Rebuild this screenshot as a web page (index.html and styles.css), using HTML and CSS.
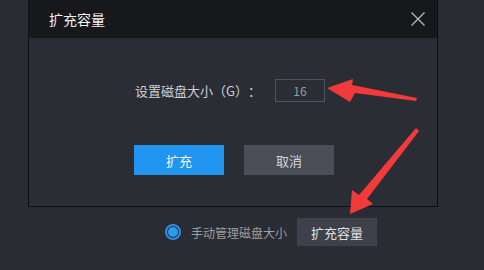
FILE: index.html
```html
<!DOCTYPE html>
<html lang="zh">
<head>
<meta charset="utf-8">
<link rel="stylesheet" href="styles.css">
</head>
<body>
<div class="page">
  <div class="dialog">
    <div class="titlebar">
      <span class="title">扩充容量</span>
      <svg class="close" width="16" height="16" viewBox="0 0 16 16"><path d="M1.5 1.5 L14.5 14.5 M14.5 1.5 L1.5 14.5" stroke="#b8b9bd" stroke-width="1.3" fill="none"/></svg>
    </div>
    <div class="body">
      <div class="row">
        <span class="label">设置磁盘大小（G）：</span>
        <div class="input">16</div>
      </div>
      <div class="actions">
        <button class="btn primary">扩充</button>
        <button class="btn secondary">取消</button>
      </div>
    </div>
  </div>
  <div class="footer">
    <span class="radio"><span class="dot"></span></span>
    <span class="ftext">手动管理磁盘大小</span>
    <button class="btn small">扩充容量</button>
  </div>
  <svg class="arrows" width="484" height="270" viewBox="0 0 484 270">
    <polygon points="327,88 353,79 352,85 417,98 416,101 355,93 350,102" fill="#f23a3a"/>
    <polygon points="350,214 352,190 359,195 416,128 419,131 367,199 373,204" fill="#f23a3a"/>
  </svg>
</div>
</body>
</html>
```
FILE: styles.css
```css
html, body {
  margin: 0;
  padding: 0;
}
body {
  background: #2a2c33;
  font-family: "Noto Sans CJK SC", "Noto Sans", sans-serif;
  width: 484px;
  height: 270px;
  overflow: hidden;
  text-spacing-trim: space-all;
}
.page {
  position: relative;
  width: 484px;
  height: 270px;
}
.dialog {
  margin-left: 28px;
  width: 408px;
  height: 206px;
  border: 1px solid #0e0f12;
  border-top: none;
  background: #2b2d35;
  display: flex;
  flex-direction: column;
}
.titlebar {
  height: 38px;
  background: #17181c;
  display: flex;
  align-items: center;
  justify-content: space-between;
  padding: 0 11px 0 20px;
  flex-shrink: 0;
}
.title {
  color: #f0f0f0;
  font-size: 14px;
}
.close {
  display: block;
}
.body {
  display: flex;
  flex-direction: column;
  align-items: center;
  padding-top: 41px;
}
.row {
  display: flex;
  align-items: center;
  gap: 14px;
  margin-right: 6px;
}
.label {
  color: #cfd0d3;
  font-size: 13px;
  text-spacing-trim: space-all;
}
.input {
  width: 48px;
  height: 21px;
  border: 1px solid #50535c;
  color: #9a9ca2;
  font-size: 12px;
  line-height: 21px;
  text-align: center;
  background: #2b2d35;
}
.actions {
  display: flex;
  gap: 20px;
  margin-top: 43px;
  margin-left: 2px;
}
.btn {
  border: none;
  font-family: inherit;
  font-size: 13px;
  padding: 0;
  cursor: pointer;
}
.primary {
  width: 90px;
  height: 30px;
  background: #2196f0;
  color: #eef6ff;
}
.secondary {
  width: 90px;
  height: 30px;
  background: #4b4e58;
  color: #d4d5d8;
}
.footer {
  display: flex;
  align-items: center;
  margin-left: 165px;
  margin-top: 11px;
}
.radio {
  width: 12px;
  height: 12px;
  border: 2px solid #2a8fe6;
  border-radius: 50%;
  display: flex;
  align-items: center;
  justify-content: center;
  box-sizing: content-box;
}
.dot {
  width: 10px;
  height: 10px;
  border-radius: 50%;
  background: #2b9bf4;
}
.ftext {
  color: #9c9ea4;
  font-size: 12px;
  margin-left: 10px;
}
.small {
  margin-left: 10px;
  width: 80px;
  height: 28px;
  background: #3e414b;
  color: #e0e1e3;
  font-size: 13px;
}
.arrows {
  position: absolute;
  left: 0;
  top: 0;
  pointer-events: none;
}
```
